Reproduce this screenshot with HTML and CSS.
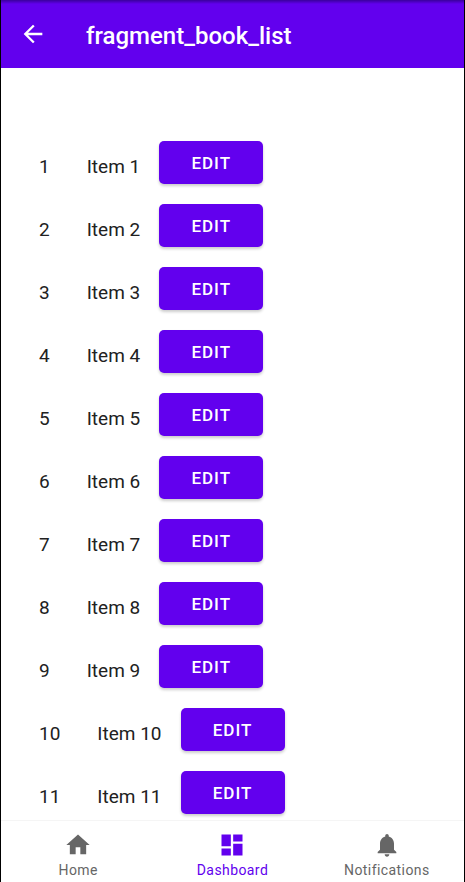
FILE: index.html
```html
<!DOCTYPE html>
<html lang="en">
<head>
<meta charset="utf-8">
<meta name="viewport" content="width=device-width, initial-scale=1">
<title>fragment_book_list</title>
<link rel="stylesheet" href="styles.css">
</head>
<body>
<div class="app">
  <header class="app-bar">
    <button class="back" type="button" aria-label="Navigate up">
      <svg viewBox="0 0 24 24" aria-hidden="true"><path d="M20 11H7.800l5.600-5.600L12 4l-8 8 8 8 1.400-1.400L7.800 13H20z"/></svg>
    </button>
    <h1 class="title">fragment_book_list</h1>
  </header>
  <main class="content">
    <ul class="list">
      <li class="row"><span class="id">1</span><span class="name">Item 1</span><button class="edit" type="button">EDIT</button></li>
      <li class="row"><span class="id">2</span><span class="name">Item 2</span><button class="edit" type="button">EDIT</button></li>
      <li class="row"><span class="id">3</span><span class="name">Item 3</span><button class="edit" type="button">EDIT</button></li>
      <li class="row"><span class="id">4</span><span class="name">Item 4</span><button class="edit" type="button">EDIT</button></li>
      <li class="row"><span class="id">5</span><span class="name">Item 5</span><button class="edit" type="button">EDIT</button></li>
      <li class="row"><span class="id">6</span><span class="name">Item 6</span><button class="edit" type="button">EDIT</button></li>
      <li class="row"><span class="id">7</span><span class="name">Item 7</span><button class="edit" type="button">EDIT</button></li>
      <li class="row"><span class="id">8</span><span class="name">Item 8</span><button class="edit" type="button">EDIT</button></li>
      <li class="row"><span class="id">9</span><span class="name">Item 9</span><button class="edit" type="button">EDIT</button></li>
      <li class="row"><span class="id">10</span><span class="name">Item 10</span><button class="edit" type="button">EDIT</button></li>
      <li class="row"><span class="id">11</span><span class="name">Item 11</span><button class="edit" type="button">EDIT</button></li>
    </ul>
  </main>
  <nav class="tabs">
    <a class="tab" href="#home">
      <svg viewBox="0 0 24 24" aria-hidden="true"><path d="M10 20v-6h4v6h5v-8h3L12 3 2 12h3v8z"/></svg>
      <span>Home</span>
    </a>
    <a class="tab tab-active" href="#dashboard" aria-current="page">
      <svg viewBox="0 0 24 24" aria-hidden="true"><path d="M3 13h8V3H3v10zm0 8h8v-6H3v6zm10 0h8V11h-8v10zm0-18v6h8V3h-8z"/></svg>
      <span>Dashboard</span>
    </a>
    <a class="tab" href="#notifications">
      <svg viewBox="0 0 24 24" aria-hidden="true"><path d="M12 22c1.1 0 2-.9 2-2h-4c0 1.1.9 2 2 2zm6-6v-5c0-3.1-1.6-5.6-4.5-6.3V4c0-.8-.7-1.5-1.5-1.5s-1.5.7-1.5 1.5v.7C7.6 5.4 6 7.900 6 11v5l-2 2v1h16v-1l-2-2z"/></svg>
      <span>Notifications</span>
    </a>
  </nav>
</div>
</body>
</html>
```
FILE: styles.css
```css
* {
  box-sizing: border-box;
}

body {
  margin: 0;
  background: #000;
  font-family: Roboto, "Liberation Sans", sans-serif;
  color: #212121;
}

.app {
  display: flex;
  flex-direction: column;
  height: 100vh;
  margin: 0 1px;
  background: #fff;
}

.app-bar {
  display: flex;
  flex: none;
  align-items: center;
  gap: 39px;
  height: 68px;
  padding: 4px 18px 0;
  background: linear-gradient(#3a009c, #6200ee 4px);
  color: #fff;
}

.back {
  display: flex;
  padding: 0 0 4px;
  border: 0;
  background: none;
  color: inherit;
}

.back svg {
  width: 28px;
  height: 28px;
}

svg {
  fill: currentColor;
}

.title {
  margin: 0;
  font-size: 24px;
  font-weight: 500;
  line-height: 32px;
}

.content {
  flex: 1;
  min-height: 0;
  overflow: hidden;
  padding: 73px 38px 0;
}

.list {
  display: flex;
  flex-direction: column;
  gap: 20px;
  margin: 0;
  padding: 0;
  list-style: none;
}

.row {
  display: flex;
  align-items: flex-start;
  height: 43px;
  font-size: 19px;
  line-height: 24px;
}

.id {
  margin-right: 37px;
  padding-top: 14px;
}

.name {
  margin-right: 19px;
  padding-top: 14px;
}

.edit {
  width: 104px;
  height: 43px;
  padding: 0;
  border: 0;
  border-radius: 5px;
  background: #6200ee;
  box-shadow: 0 2px 3px rgba(0, 0, 0, 0.2);
  color: #fff;
  font: 500 17px/20px Roboto, "Liberation Sans", sans-serif;
  letter-spacing: 1px;
}

.tabs {
  display: flex;
  flex: none;
  height: 62px;
  border-top: 1px solid #f5f5f5;
  background: #fff;
}

.tab {
  display: flex;
  flex: 1;
  flex-direction: column;
  align-items: center;
  padding-top: 10px;
  color: #666;
  font-size: 14px;
  line-height: 22px;
  letter-spacing: 0.03em;
  text-decoration: none;
}

.tab svg {
  width: 28px;
  height: 28px;
}

.tab-active {
  color: #6200ee;
}
```
